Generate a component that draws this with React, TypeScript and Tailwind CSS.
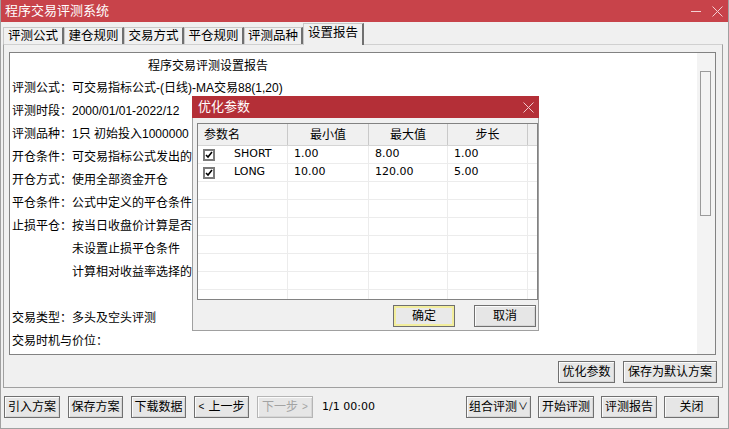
import { ReactNode } from 'react';

const tabs = ['评测公式', '建仓规则', '交易方式', '平仓规则', '评测品种', '设置报告'];
const tabWidths = ['w-[61px]', 'w-[60px]', 'w-[60px]', 'w-[60px]', 'w-[59px]', 'w-[61px]'];

// 报告内容 (对话框遮住的部分只保留可见文字)
const reportLines: { label: string; text: string }[] = [
  { label: '评测时段：', text: '2000/01/01-2022/12' },
  { label: '评测品种：', text: '1只 初始投入1000000' },
  { label: '开仓条件：', text: '可交易指标公式发出的' },
  { label: '开仓方式：', text: '使用全部资金开仓' },
  { label: '平仓条件：', text: '公式中定义的平仓条件' },
  { label: '止损平仓：', text: '按当日收盘价计算是否' },
  { label: '', text: '未设置止损平仓条件' },
  { label: '', text: '计算相对收益率选择的' },
];

const params = [
  { name: 'SHORT', min: '1.00', max: '8.00', step: '1.00' },
  { name: 'LONG', min: '10.00', max: '120.00', step: '5.00' },
];

const Btn = ({ children, className = '', disabled = false }: { children: ReactNode; className?: string; disabled?: boolean }) => (
  <button
    type="button"
    className={`h-[22px] flex items-center justify-center border bg-[#e6e6e6] shadow-[inset_1px_1px_0_#fbfbfb,inset_-1px_-1px_0_#d6d6d6] leading-none ${
      disabled ? 'border-[#b5b5b5] text-[#a3a3a3]' : 'border-[#707070] text-black'
    } ${className}`}
  >
    {children}
  </button>
);

const Check = () => (
  <div className="w-[12px] h-[12px] border-2 border-[#7a7a7a] bg-white flex items-center justify-center">
    <svg width="8" height="8" viewBox="0 0 8 8">
      <polyline points="1,4 3,6 7,1" fill="none" stroke="#000" strokeWidth="1.6" />
    </svg>
  </div>
);

const App = () => {
  return (
    <div className="w-[729px] h-[429px] relative overflow-hidden bg-[#f0f0f0] border-x border-b border-[#a0a0a0] flex flex-col text-[12px] text-black font-['Liberation_Sans','Noto_Sans_CJK_SC',sans-serif]">
      {/* 标题栏 */}
      <div className="h-[22px] shrink-0 -mx-px bg-[#c8434a] flex items-center justify-between pl-[5px] pr-[6px] text-white text-[13px]">
        <span>程序交易评测系统</span>
        <div className="flex items-center gap-[11px]">
          <div className="w-[10px] h-px bg-[#f3d0d2]" />
          <svg width="11" height="11" viewBox="0 0 11 11">
            <path d="M0.5 0.5 L10.5 10.5 M10.5 0.5 L0.5 10.5" stroke="#f3d0d2" strokeWidth="1" />
          </svg>
        </div>
      </div>

      {/* 标签页 */}
      <div className="h-[22px] shrink-0 flex items-end pl-[2px] relative z-10">
        {tabs.map((t, i) => {
          const active = i === tabs.length - 1;
          return (
            <div
              key={t}
              className={`${tabWidths[i]} flex items-center justify-center border-l border-t border-r-2 border-l-[#c8c8c8] border-t-[#c8c8c8] border-r-[#707070] text-[12.5px] ${
                active ? 'h-[22px] -mb-px bg-[#f0f0f0] pb-[2px]' : 'h-[17px] bg-[#f0f0f0]'
              }`}
            >
              {t}
            </div>
          );
        })}
      </div>

      {/* 面板 */}
      <div className="ml-[2px] w-[720px] h-[344px] shrink-0 border border-[#a0a0a0] border-t-[#d0d0d0] flex flex-col">
        <div className="ml-[5px] mt-[7px] w-[707px] h-[303px] bg-white border border-[#828282] flex">
          <div className="flex-1 pl-[2px] pt-[3px] leading-[23px] text-[12px]">
            <div className="pl-[136px] leading-[21px]">程序交易评测设置报告</div>
            <div className="flex whitespace-nowrap">
              <span className="w-[60px] shrink-0">评测公式：</span>
              <span>可交易指标公式-(日线)-MA交易88(1,20)</span>
            </div>
            {reportLines.map((l, i) => (
              <div key={i} className="flex whitespace-nowrap w-[181px] overflow-hidden">
                <span className="w-[60px] shrink-0">{l.label}</span>
                <span>{l.text}</span>
              </div>
            ))}
            <div className="h-[23px]" />
            <div className="flex">
              <span className="w-[60px] shrink-0">交易类型：</span>
              <span>多头及空头评测</span>
            </div>
            <div>交易时机与价位：</div>
          </div>
          <div className="w-[18px] bg-[#f3f3f3] pl-[3px] pt-[18px]">
            <div className="w-[11px] h-[145px] border border-[#9a9a9a] bg-[#f3f3f3]" />
          </div>
        </div>
        <div className="mt-[6px] flex justify-end gap-[8px] pr-[5px]">
          <Btn className="w-[57px]">优化参数</Btn>
          <Btn className="w-[94px]">保存为默认方案</Btn>
        </div>
      </div>

      {/* 底部按钮 */}
      <div className="mt-[8px] flex items-center pl-[3px] pr-[9px]">
        <div className="flex items-center gap-[8px]">
          <Btn className="w-[56px]">引入方案</Btn>
          <Btn className="w-[55px]">保存方案</Btn>
          <Btn className="w-[55px]">下载数据</Btn>
          <Btn className="w-[55px]">
            <span className="text-[10px] mr-[4px]">&lt;</span>上一步
          </Btn>
          <Btn className="w-[56px]" disabled>
            下一步<span className="text-[10px] ml-[4px]">&gt;</span>
          </Btn>
          <span className="ml-[1px] font-['DejaVu_Sans',sans-serif] text-[11px]">1/1 00:00</span>
        </div>
        <div className="ml-auto flex items-center gap-[7px]">
          <Btn className="w-[65px]">
            组合评测<span className="text-[10px] ml-[1px]">∨</span>
          </Btn>
          <Btn className="w-[56px]">开始评测</Btn>
          <Btn className="w-[56px]">评测报告</Btn>
          <Btn className="w-[55px]">关闭</Btn>
        </div>
      </div>

      {/* 优化参数 对话框 */}
      <div className="absolute left-[191px] top-[96px] w-[347px] h-[235px] bg-[#f0f0f0] border border-[#a0a0a0] border-t-0 flex flex-col z-20">
        <div className="h-[22px] shrink-0 -mx-px bg-[#b42f37] flex items-center justify-between pl-[6px] pr-[5px] text-white text-[13px]">
          <span>优化参数</span>
          <svg width="11" height="11" viewBox="0 0 11 11">
            <path d="M0.5 0.5 L10.5 10.5 M10.5 0.5 L0.5 10.5" stroke="#f1c8cb" strokeWidth="1" />
          </svg>
        </div>
        <div className="ml-[4px] mt-[5px] w-[341px] h-[177px] bg-white border border-[#828282] overflow-hidden flex flex-col">
          <div className="h-[22px] shrink-0 flex bg-[#f0f0f0] border-b border-[#d5d5d5]">
            <div className="w-[90px] pl-[6px] flex items-center border-r border-[#c9c9c9]">参数名</div>
            <div className="w-[81px] flex items-center justify-center border-r border-[#c9c9c9]">最小值</div>
            <div className="w-[79px] flex items-center justify-center border-r border-[#c9c9c9]">最大值</div>
            <div className="w-[80px] flex items-center justify-center border-r border-[#c9c9c9]">步长</div>
            <div className="flex-1" />
          </div>
          {Array.from({ length: 9 }).map((_, i) => {
            const p = params[i];
            return (
              <div key={i} className="h-[18px] shrink-0 flex border-b border-[#ececec] font-['DejaVu_Sans',sans-serif] text-[11px]">
                <div className="w-[90px] flex items-center border-r border-[#ececec]">
                  {p && (
                    <>
                      <div className="ml-[5px] w-[31px] shrink-0">
                        <Check />
                      </div>
                      <span>{p.name}</span>
                    </>
                  )}
                </div>
                <div className="w-[81px] pl-[6px] flex items-center border-r border-[#ececec]">{p?.min}</div>
                <div className="w-[79px] pl-[6px] flex items-center border-r border-[#ececec]">{p?.max}</div>
                <div className="w-[80px] pl-[6px] flex items-center border-r border-[#ececec]">{p?.step}</div>
                <div className="flex-1" />
              </div>
            );
          })}
        </div>
        <div className="mt-[5px] flex justify-end gap-[19px] pr-[2px]">
          <button
            type="button"
            className="w-[62px] h-[22px] border border-[#6f6f6f] bg-[#e9e9e9] shadow-[inset_0_0_0_2px_#f3ee9c] leading-none"
          >
            确定
          </button>
          <Btn className="w-[62px]">取消</Btn>
        </div>
      </div>
    </div>
  );
};

export default App;
